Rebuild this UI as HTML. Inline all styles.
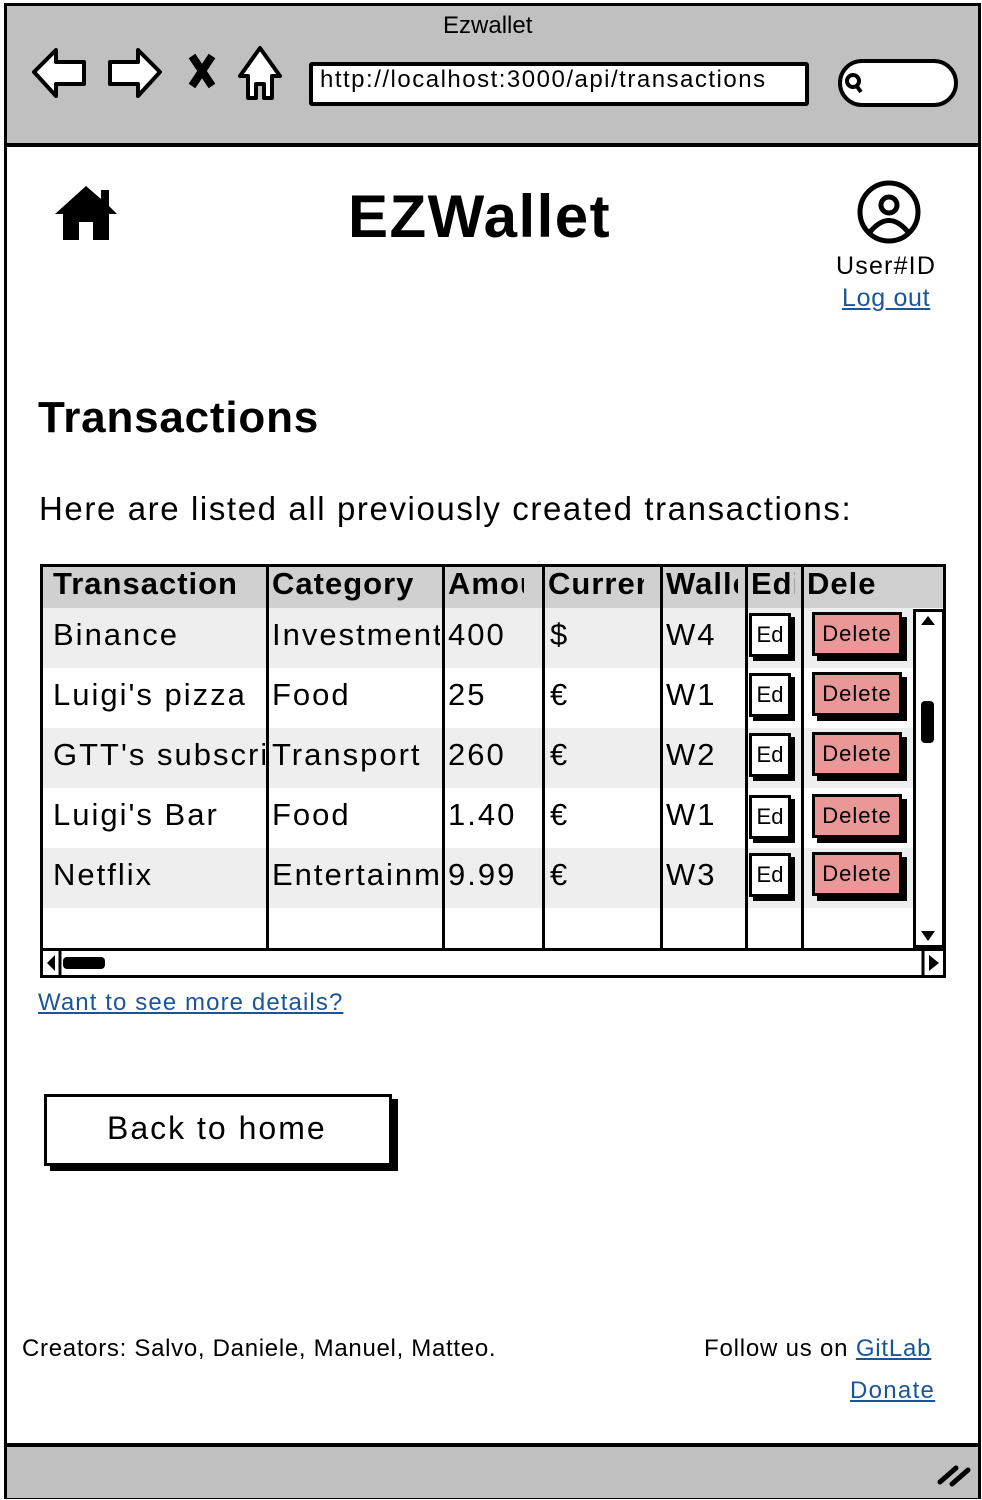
<!DOCTYPE html>
<html><head><style>
body{margin:0;width:982px;height:1500px;position:relative;background:#fff;font-family:"Liberation Sans",sans-serif;overflow:hidden}
.a{position:absolute}
.t{position:absolute;white-space:nowrap;color:#000}
.lnk{color:#1a5599;text-decoration:underline}
.row{position:absolute;left:43px;width:870px;height:60px}
.cell{position:absolute;font-size:31px;white-space:nowrap;overflow:hidden;letter-spacing:2px}
.vl{position:absolute;top:564px;height:384px;width:3px;background:#000}
.ed{position:absolute;width:36px;height:38px;background:#fff;border:3px solid #000;box-shadow:4px 4px 0 #000;font-size:22px;line-height:38px;text-align:center;overflow:hidden}
.del{position:absolute;width:84px;height:38px;background:#e99797;border:3px solid #000;box-shadow:5px 5px 0 #000;font-size:22px;line-height:38px;text-align:center;letter-spacing:1px;overflow:hidden}
</style></head><body>
<div class="a" style="left:4px;top:3px;width:971px;height:1490px;border:3px solid #000"></div>
<div class="a" style="left:7px;top:6px;width:971px;height:137px;background:#c0c0c0;border-bottom:4px solid #000"></div>
<div class="t" style="left:443px;top:12px;font-size:24px">Ezwallet</div>
<svg class="a" style="left:30px;top:44px" width="260" height="60" viewBox="0 0 260 60">
<path d="M4 28 L26 6 L26 18 L54 18 L54 40 L26 40 L26 52 Z" fill="#fff" stroke="#000" stroke-width="4" stroke-linejoin="round"/>
<path d="M130 28 L108 6 L108 18 L80 18 L80 40 L108 40 L108 52 Z" fill="#fff" stroke="#000" stroke-width="4" stroke-linejoin="round"/>
<path d="M162 12 L182 42 M182 12 L162 42" stroke="#000" stroke-width="8"/>
<path d="M230 4 L210 32 L218 32 L218 54 L226 54 L226 40 L234 40 L234 54 L242 54 L242 32 L250 32 Z" fill="#fff" stroke="#000" stroke-width="4" stroke-linejoin="round"/>
</svg>
<div class="a" style="left:309px;top:62px;width:492px;height:36px;background:#fff;border:4px solid #000;border-radius:3px"></div>
<div class="t" style="left:320px;top:66px;font-size:24px;letter-spacing:1.5px">http://localhost:3000/api/transactions</div>
<div class="a" style="left:838px;top:59px;width:112px;height:40px;background:#fff;border:4px solid #000;border-radius:24px"></div>
<svg class="a" style="left:842px;top:70px" width="24" height="26"><circle cx="11" cy="11" r="6" fill="none" stroke="#000" stroke-width="4"/><path d="M14 15 L19 22" stroke="#000" stroke-width="4"/></svg>
<svg class="a" style="left:53px;top:184px" width="66" height="58" viewBox="0 0 66 58"><path d="M33 2 L2 30 L10 30 L10 56 L26 56 L26 38 L40 38 L40 56 L56 56 L56 30 L64 30 L56 22 L56 6 L48 6 L48 15 Z" fill="#000"/></svg>
<div class="t" style="left:348px;top:182px;font-size:60px;font-weight:bold;letter-spacing:1.5px">EZWallet</div>
<svg class="a" style="left:856px;top:179px" width="66" height="66"><circle cx="33" cy="33" r="29" fill="none" stroke="#000" stroke-width="5"/><circle cx="33" cy="26" r="8" fill="none" stroke="#000" stroke-width="5"/><path d="M14 53 Q33 30 52 53" fill="none" stroke="#000" stroke-width="5"/></svg>
<div class="t" style="left:836px;top:252px;font-size:25px;letter-spacing:1.2px">User#ID</div>
<div class="t lnk" style="left:842px;top:284px;font-size:25px;letter-spacing:0.7px">Log out</div>
<div class="t" style="left:38px;top:393px;font-size:44px;font-weight:bold;letter-spacing:0.8px">Transactions</div>
<div class="t" style="left:39px;top:490px;font-size:33px;letter-spacing:1.6px">Here are listed all previously created transactions:</div>
<div class="a" style="left:40px;top:564px;width:900px;height:381px;border:3px solid #000;background:#fff"></div>
<div class="a" style="left:43px;top:567px;width:900px;height:41px;background:#d0d0d0"></div>
<div class="row" style="top:608px;background:#eee"></div>
<div class="row" style="top:728px;background:#eee"></div>
<div class="row" style="top:848px;background:#eee"></div>
<div class="vl" style="left:266px"></div><div class="vl" style="left:442px"></div><div class="vl" style="left:542px"></div><div class="vl" style="left:660px"></div><div class="vl" style="left:745px"></div><div class="vl" style="left:801px"></div>
<div class="cell" style="left:53px;top:566px;font-weight:bold;width:212px;letter-spacing:1px">Transaction</div>
<div class="cell" style="left:272px;top:566px;font-weight:bold;width:168px;letter-spacing:1px">Category</div>
<div class="cell" style="left:448px;top:566px;font-weight:bold;width:76px;letter-spacing:1px">Amount</div>
<div class="cell" style="left:548px;top:566px;font-weight:bold;width:96px;letter-spacing:1px">Currency</div>
<div class="cell" style="left:666px;top:566px;font-weight:bold;width:72px;letter-spacing:1px">Wallet</div>
<div class="cell" style="left:751px;top:566px;font-weight:bold;width:44px;letter-spacing:1px">Edit</div>
<div class="cell" style="left:807px;top:566px;font-weight:bold;width:100px;letter-spacing:1px">Dele</div>

<div class="cell" style="left:53px;top:617px">Binance</div><div class="cell" style="left:272px;top:617px;width:168px">Investment</div><div class="cell" style="left:448px;top:617px">400</div><div class="cell" style="left:550px;top:617px">$</div><div class="cell" style="left:666px;top:617px">W4</div>
<div class="cell" style="left:53px;top:677px">Luigi's pizza</div><div class="cell" style="left:272px;top:677px">Food</div><div class="cell" style="left:448px;top:677px">25</div><div class="cell" style="left:550px;top:677px">€</div><div class="cell" style="left:666px;top:677px">W1</div>
<div class="cell" style="left:53px;top:737px;width:212px">GTT's subscription</div><div class="cell" style="left:272px;top:737px;width:168px">Transport</div><div class="cell" style="left:448px;top:737px">260</div><div class="cell" style="left:550px;top:737px">€</div><div class="cell" style="left:666px;top:737px">W2</div>
<div class="cell" style="left:53px;top:797px">Luigi's Bar</div><div class="cell" style="left:272px;top:797px">Food</div><div class="cell" style="left:448px;top:797px">1.40</div><div class="cell" style="left:550px;top:797px">€</div><div class="cell" style="left:666px;top:797px">W1</div>
<div class="cell" style="left:53px;top:857px">Netflix</div><div class="cell" style="left:272px;top:857px;width:168px">Entertainment</div><div class="cell" style="left:448px;top:857px">9.99</div><div class="cell" style="left:550px;top:857px">€</div><div class="cell" style="left:666px;top:857px">W3</div>

<div class="ed" style="left:749px;top:613px">Ed</div><div class="del" style="left:812px;top:612px">Delete</div>
<div class="ed" style="left:749px;top:673px">Ed</div><div class="del" style="left:812px;top:672px">Delete</div>
<div class="ed" style="left:749px;top:733px">Ed</div><div class="del" style="left:812px;top:732px">Delete</div>
<div class="ed" style="left:749px;top:795px">Ed</div><div class="del" style="left:812px;top:794px">Delete</div>
<div class="ed" style="left:749px;top:853px">Ed</div><div class="del" style="left:812px;top:852px">Delete</div>

<div class="a" style="left:913px;top:609px;width:26px;height:333px;background:#fff;border:3px solid #000"></div>
<svg class="a" style="left:918px;top:613px" width="20" height="332"><path d="M3 12 L10 3 L17 12 Z" fill="#000"/><path d="M3 318 L10 328 L17 318 Z" fill="#000"/><rect x="3" y="88" width="13" height="42" rx="4" fill="#000"/></svg>
<div class="a" style="left:40px;top:948px;width:900px;height:24px;background:#fff;border:3px solid #000"></div>
<svg class="a" style="left:43px;top:951px" width="900" height="24"><path d="M12 4 L4 12 L12 20 Z" fill="#000"/><path d="M886 4 L896 12 L886 20 Z" fill="#000"/><rect x="20" y="6" width="42" height="12" rx="4" fill="#000"/><path d="M17 0 V24 M880 0 V24" stroke="#000" stroke-width="3"/></svg>
<div class="t lnk" style="left:38px;top:989px;font-size:24px;letter-spacing:1.1px">Want to see more details?</div>
<div class="a" style="left:44px;top:1094px;width:342px;height:66px;border:3px solid #000;box-shadow:6px 5px 0 #000;background:#fff"></div>
<div class="t" style="left:107px;top:1110px;font-size:32px;letter-spacing:2px">Back to home</div>
<div class="t" style="left:22px;top:1335px;font-size:24px;letter-spacing:0.7px">Creators: Salvo, Daniele, Manuel, Matteo.</div>
<div class="t" style="left:704px;top:1335px;font-size:24px;letter-spacing:0.8px">Follow us on <span class="lnk">GitLab</span></div>
<div class="t lnk" style="left:850px;top:1377px;font-size:24px;letter-spacing:1.3px">Donate</div>
<div class="a" style="left:7px;top:1443px;width:971px;height:51px;background:#c0c0c0;border-top:4px solid #000"></div>
<svg class="a" style="left:936px;top:1460px" width="36" height="28"><path d="M4 22 L20 8 M16 24 L32 10" stroke="#000" stroke-width="5" stroke-linecap="round"/></svg>
</body></html>
